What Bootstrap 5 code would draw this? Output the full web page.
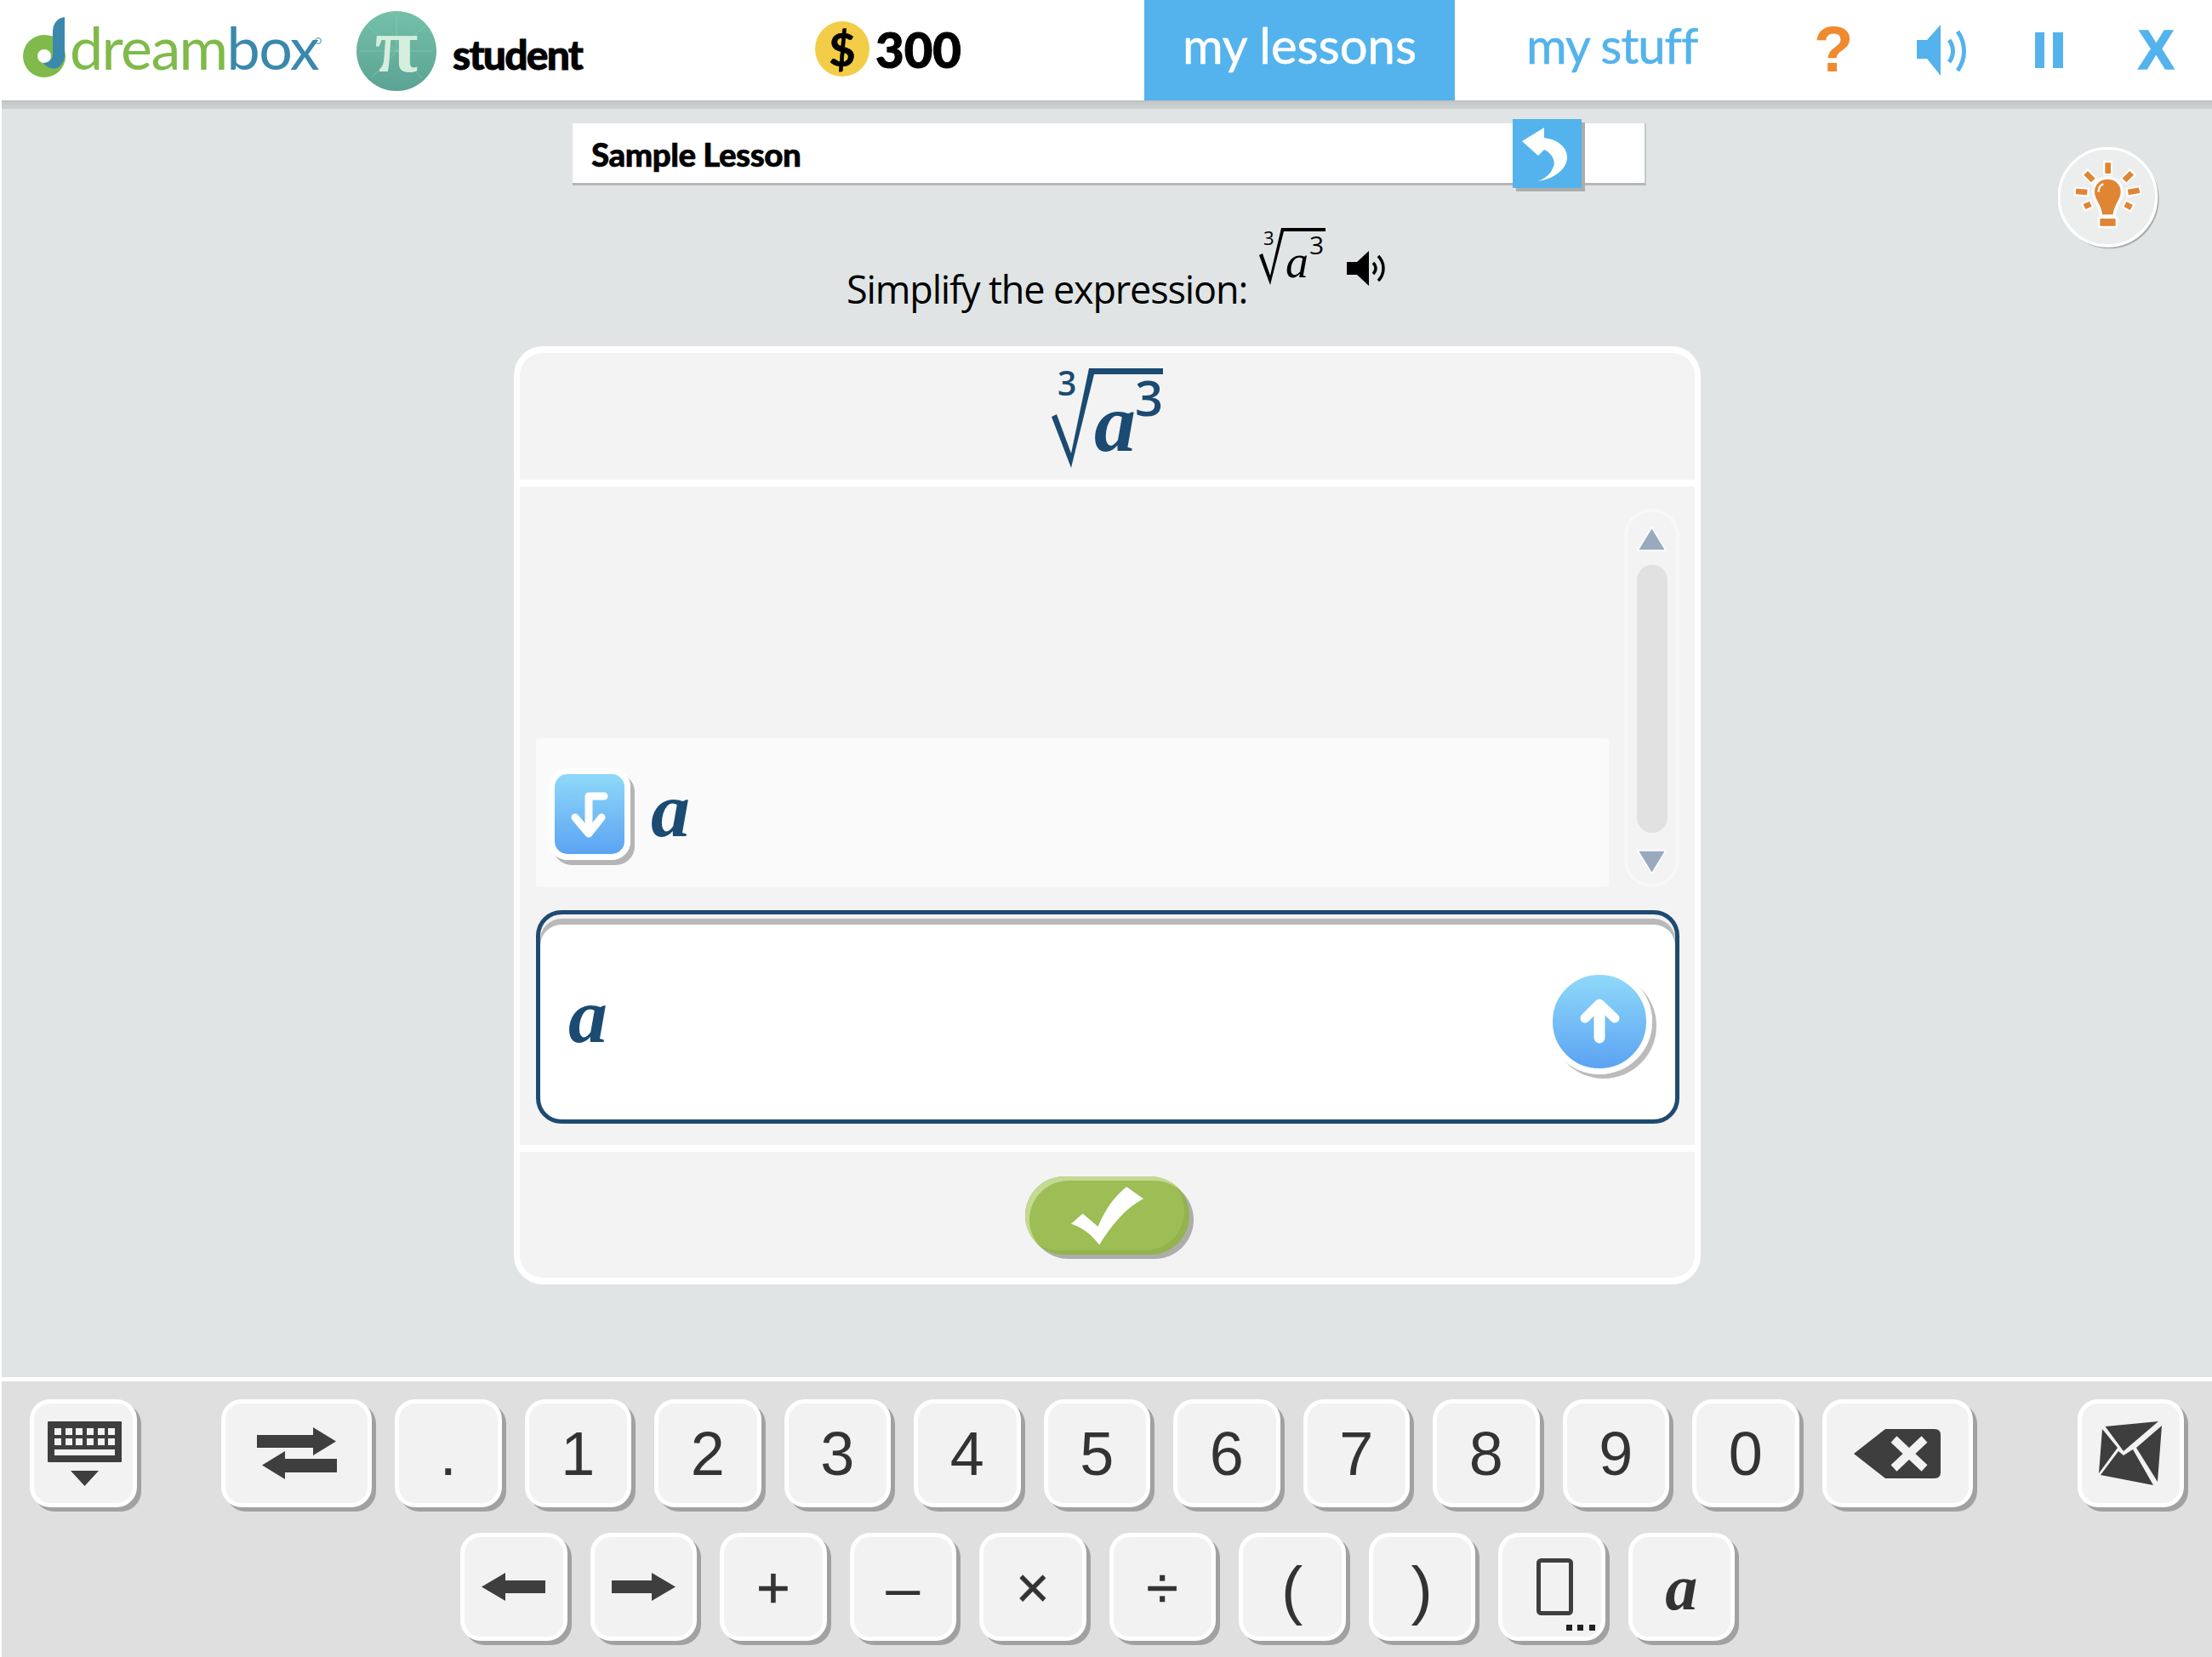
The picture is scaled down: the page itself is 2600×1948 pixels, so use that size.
<!DOCTYPE html>
<html lang="en">
<head>
<meta charset="utf-8">
<title>DreamBox lesson</title>
<link href="https://cdn.jsdelivr.net/npm/bootstrap@5.3.0/dist/css/bootstrap.min.css" rel="stylesheet">
<style>
html,body{margin:0;background:#fff}
.app{width:2600px;height:1948px;padding-left:2px;overflow:hidden;font-family:"Lato",sans-serif;background:#fff}
.top-bar{height:118px;background:#fff}
.top-shade{height:10px;background:linear-gradient(#b8bcbc,#c4c8c8 20%,#ced1d2)}
.logo-svg{width:518px;height:118px;flex:none}
.logo-word{font-family:"Lato",sans-serif;font-weight:400;font-size:70px;letter-spacing:-1.6px}
.who{width:426px;margin-left:12px;font-weight:900;font-size:48px;color:#000;line-height:1;padding-top:10px;letter-spacing:-1.8px;-webkit-text-stroke:.8px #000}
.coin{width:64px;height:65px;border-radius:50%;background:#f3cd47;font-weight:700;font-size:54px;line-height:65px;text-align:center;color:#000;margin-top:-3px;-webkit-text-stroke:.6px #000}
.coins{width:316px;margin-left:7px;font-weight:900;font-size:58px;line-height:1;color:#000;margin-top:-2px;-webkit-text-stroke:1px #000}
.tab-on{width:365px;height:118px;background:#54b3ec;color:#fff;font-size:58px;line-height:106px;text-align:center;font-weight:400;-webkit-text-stroke:.5px #fff}
.tab-off{width:338px;margin-left:84px;color:#54b3ec;font-size:58px;line-height:106px;align-self:flex-start;font-weight:400;letter-spacing:-1px;-webkit-text-stroke:.5px #54b3ec}
.ico-q{width:121px;color:#ef8a2f;font-family:"Liberation Sans",sans-serif;font-weight:700;font-size:76px;line-height:1;margin-top:-2px}
.ico-snd{width:139px;flex:none}
.ico-pause{width:121px;flex:none}
.ico-x{color:#54b3ec;font-family:"Liberation Sans",sans-serif;font-weight:700;font-size:64px;line-height:1;-webkit-text-stroke:1.5px #54b3ec}
.stage{background:#e0e4e5;padding-top:17px}
.hint{position:absolute;left:2417px;top:45px;width:122px;height:124px}
.title-bar{width:1262px;height:73px;margin-left:671px;background:#fff;border-bottom:3px solid #b3b7b7;border-right:2px solid #c4c8c8}
.title-text{font-weight:900;font-size:38.500px;color:#000;padding-left:22px;padding-top:2px;line-height:1;letter-spacing:-.5px;-webkit-text-stroke:.6px #000}
.back-btn{width:81px;height:81px;background:#54b3ec;margin:-5px 74px -6px 0;box-shadow:4px 4px 0 #a9adad;flex:none;border:0;padding:0}
.prompt{margin:47px 0 0 993px;height:142px}
.prompt-text{font-size:45px;line-height:1;color:#000;margin-top:52px;width:484px;flex:none;white-space:nowrap;font-family:"Open Sans",sans-serif;letter-spacing:-1.15px}
.prompt-snd{margin-left:19px;margin-top:30px}
.task{width:1395px;height:1103px;margin-left:602px;background:#f3f3f3;border:solid #fff;border-width:8px 7px;border-radius:34px;overflow:hidden}
.task-top{height:149px;padding-top:7px;border-bottom:0}
.sep-line{height:8px;background:#fff}
.task-mid{height:774px;padding:26px 18px 25px 19px}
.hist{height:445px}
.hist-row{height:175px;background:#fafafa;padding-left:15px;border-radius:4px}
.a-var{font-family:"Liberation Serif",serif;font-weight:700;font-style:italic;font-size:92px;line-height:1;color:#1b4a72}
.down-btn{width:96px;height:108px;padding:0;border:7px solid #fff;border-radius:22px;background:linear-gradient(#8fd9fa,#5ba3f2);box-shadow:5px 6px 0 #b5b5b5;margin:3px 24px 0 0}
.down-btn svg{display:block}
.sbar{width:65px;height:445px;border:4px solid #f8f8f8;border-radius:32px;padding-top:17px;margin-left:18px;flex:none}
.sbar svg{display:block}
.sbar-track{width:36px;height:315px;border-radius:18px;background:#e1e1e1;margin:15px 0 19px}
.answer{height:251px;margin-top:27px;background:#fff;border:5px solid #1e4a72;border-radius:30px;padding:0 27px 0 33px;box-shadow:inset 0 5px 0 #f2f2f2,inset 0 12px 0 #b9b9b9}
.up-btn{width:124px;height:124px;padding:0;border:7px solid #fff;border-radius:50%;background:linear-gradient(#8fd9fa,#5ba3f2);box-shadow:5px 5px 0 #bbb;margin-top:11px}
.up-btn svg{display:block}
.task-foot{height:148px}
.ok-btn{width:193px;height:92px;padding:0;border:0;border-radius:46px;background:#9dbd55;box-shadow:inset 5px 5px 0 #c3d994,inset -6px -5px 0 #93b34e,5px 5px 0 #adadad;margin-top:2px}
.ok-btn svg{display:block}
.pad{height:329px;background:#dfdfdf;border-top:5px solid #fff;padding-top:21px}
.pad-row{height:127px}
.pad-row-2{margin-top:30px;padding-left:539px}
.pad-row-1{padding-left:33px}
.kp-key{width:125.5px;height:127px;flex:none;padding:0;background:#f2f2f2;border:5px solid #fff;border-radius:24px;box-shadow:5px 5px 0 #a1a1a1;color:#333;font-family:"Liberation Sans",sans-serif;font-size:72px;line-height:1;margin-right:27px}
.kp-wide{width:177px}
.kp-first{margin-right:99.5px}
.kp-mail{margin-left:auto;margin-right:33px}
.kp-sm{font-size:68px;-webkit-text-stroke:.6px #333}
.kp-var{font-family:"Liberation Serif",serif;font-weight:700;font-style:italic;font-size:76px}
.kp-minus{font-size:72px;padding-top:0}
.kp-paren{font-size:76px;font-weight:400;padding-top:6px}
</style>
</head>
<body>
<div class="app d-flex flex-column">
  <header>
    <div class="top-bar d-flex align-items-center">
      <svg class="logo-svg" viewBox="2 0 518 118" role="img" aria-label="dreambox">
        <path d="M28,63 C31,50 46,41 62,42 L62,54 C48,49 36,52 28,63Z" fill="#89c7e4"/>
        <circle cx="52" cy="66" r="25" fill="#7fba4a"/>
        <circle cx="52" cy="66" r="8" fill="#fff"/>
        <path d="M76,20 C67,21 62,28 62,38 L62,64 C62,70 57,74 51,74 C55,80 65,83 70,78 C74,74 76,70 76,66Z" fill="#3b88ad"/>
        <text class="logo-word" x="82" y="82"><tspan fill="#7fba4a">dream</tspan><tspan fill="#3b88ad">box</tspan></text>
        <circle cx="374" cy="48" r="3.4" fill="none" stroke="#3b88ad" stroke-width="1"/>
        <defs>
          <linearGradient id="piFill" x1="0" y1="0" x2="0" y2="1"><stop offset="0" stop-color="#74c0a8"/><stop offset="1" stop-color="#5ba394"/></linearGradient>
        </defs>
        <circle cx="466" cy="60" r="47" fill="url(#piFill)"/>
        <g stroke="#8fd0ba" stroke-width="1" opacity=".6"><path d="M466,60 L466,18M466,60 L500,30M466,60 L432,30M466,60 L508,60M466,60 L424,60M466,60 L496,92M466,60 L436,92"/></g>
        <text x="466" y="84" text-anchor="middle" font-family="Liberation Serif" font-weight="700" font-size="92" fill="#d6eedd">π</text>
      </svg>
      <div class="who">student</div>
      <div class="coin">$</div>
      <div class="coins">300</div>
      <div class="tab-on">my lessons</div>
      <div class="tab-off">my stuff</div>
      <div class="ico-q">?</div>
      <svg class="ico-snd" height="60" viewBox="0 0 139 60" aria-label="sound">
        <path d="M0,18 H12 L28,0 V60 L12,40 H0Z" fill="#54b3ec"/>
        <path d="M38,18 C44,26 44,36 38,44" fill="none" stroke="#54b3ec" stroke-width="5"/>
        <path d="M48,8 C58,22 58,40 48,54" fill="none" stroke="#54b3ec" stroke-width="5"/>
      </svg>
      <svg class="ico-pause" height="42" viewBox="0 0 121 42" aria-label="pause"><rect width="11" height="42" fill="#54b3ec"/><rect x="21" width="12" height="42" fill="#54b3ec"/></svg>
      <div class="ico-x">X</div>
    </div>
    <div class="top-shade"></div>
  </header>

  <main class="stage flex-grow-1 position-relative d-flex flex-column align-items-start">
    <svg class="hint" viewBox="55 42 366 372" aria-label="hint">
      <circle cx="236" cy="225" r="175" fill="#a9adad"/>
      <circle cx="230" cy="218" r="172" fill="#eceded" stroke="#fff" stroke-width="10"/>
      <g stroke="#fff" stroke-width="32"><path d="M231,90 V140M148,128 L184,164M320,128 L284,164M112,198 L164,201M348,192 L296,203M142,255 L176,240M320,258 L286,240"/></g>
      <g stroke="#e08534" stroke-width="20"><path d="M231,97 V135M153,133 L179,159M315,133 L289,159M118,198 L158,201M342,194 L302,201M148,252 L170,242M314,255 L292,243"/></g>
      <path d="M230,150 C190,150 175,185 180,210 C185,235 205,250 207,285 H253 C255,250 275,235 280,210 C285,185 270,150 230,150Z" fill="#e08534" stroke="#fff" stroke-width="10"/>
      <rect x="199" y="290" width="63" height="34" rx="6" fill="#e08534" stroke="#fff" stroke-width="8"/>
      <path d="M198,200 C198,185 205,175 215,172" fill="none" stroke="#fff" stroke-width="7"/>
    </svg>

    <div class="title-bar d-flex align-items-center">
      <div class="title-text flex-grow-1">Sample Lesson</div>
      <button class="btn back-btn rounded-0" aria-label="back">
        <svg width="81" height="81" viewBox="0 0 81 81"><path d="M37,10 L11,26 L30,43 L37,36 C46,40 52,50 47,58 C45,64 38,70 30,73 C50,70 64,58 64,45 C64,32 52,24 37,22Z" fill="#fff"/></svg>
      </button>
    </div>

    <div class="prompt d-flex align-items-start">
      <div class="prompt-text">Simplify the expression:</div>
      <svg width="85" height="72" viewBox="1479 264 85 72" role="img" aria-label="cube root of a cubed">
        <path d="M1480,299 L1484,297 L1493,323 L1506,267 H1558 V271 H1509 L1493,334Z" fill="#000"/>
        <text x="1485" y="287" font-family="Open Sans" font-size="22" fill="#000">3</text>
        <text x="1511" y="325" font-family="Liberation Serif" font-style="italic" font-size="54" fill="#000">a</text>
        <text x="1539" y="298" font-family="Open Sans" font-size="30" fill="#000">3</text>
      </svg>
      <svg class="prompt-snd" width="45" height="42" viewBox="0 0 45 42" aria-label="read aloud">
        <path d="M0,13 H12 L26,0 V41 L12,28 H0Z" fill="#000"/>
        <path d="M31,14 C35,18 35,23 31,27" fill="none" stroke="#000" stroke-width="3.500"/>
        <path d="M37,6 C45,14 45,27 37,35" fill="none" stroke="#000" stroke-width="3.500"/>
      </svg>
    </div>

    <section class="task">
      <div class="task-top d-flex justify-content-center">
        <svg width="140" height="133" viewBox="0 -8 140 133" role="img" aria-label="cube root of a cubed">
          <path d="M4,60 L10,57 L27,103 L48,3 H135 V10 H54 L27,120Z" fill="#1b4a72"/>
          <text x="11" y="35" font-family="Open Sans" font-weight="600" font-size="39" fill="#1b4a72">3</text>
          <text x="54" y="100" font-family="Liberation Serif" font-weight="700" font-style="italic" font-size="98" fill="#1b4a72">a</text>
          <text x="102" y="59" font-family="Open Sans" font-weight="600" font-size="58" fill="#1b4a72">3</text>
        </svg>
      </div>
      <div class="sep-line"></div>
      <div class="task-mid">
        <div class="hist d-flex">
          <div class="flex-grow-1 d-flex flex-column justify-content-end">
            <div class="hist-row d-flex align-items-center">
              <button class="btn down-btn" aria-label="move down">
                <svg width="82" height="94" viewBox="0 0 82 94"><path d="M58,26 H40 V65" fill="none" stroke="#fff" stroke-width="9" stroke-linecap="round" stroke-linejoin="round"/><path d="M24,51 L40,70 L55,51" fill="none" stroke="#fff" stroke-width="9" stroke-linecap="round" stroke-linejoin="round"/></svg>
              </button>
              <span class="a-var mb-2">a</span>
            </div>
          </div>
          <div class="sbar d-flex flex-column align-items-center">
            <svg width="35" height="30" viewBox="0 0 35 30"><path d="M17.500,1 L34,28 H1Z" fill="#99aabf" stroke="#fff" stroke-width="1.500" stroke-linejoin="round"/></svg>
            <div class="sbar-track"></div>
            <svg width="35" height="30" viewBox="0 0 35 30"><path d="M1,2 H34 L17.500,29Z" fill="#99aabf" stroke="#fff" stroke-width="1.500" stroke-linejoin="round"/></svg>
          </div>
        </div>
        <div class="answer d-flex align-items-center justify-content-between">
          <span class="a-var mb-1">a</span>
          <button class="btn up-btn" aria-label="move up">
            <svg width="110" height="110" viewBox="0 0 110 110"><path d="M38,51 L55,34 L73,51" fill="none" stroke="#fff" stroke-width="11" stroke-linecap="round" stroke-linejoin="round"/><path d="M55,36 V74" fill="none" stroke="#fff" stroke-width="13" stroke-linecap="round"/></svg>
          </button>
        </div>
      </div>
      <div class="sep-line"></div>
      <div class="task-foot d-flex align-items-center justify-content-center">
        <button class="btn ok-btn" aria-label="submit">
          <svg width="193" height="92" viewBox="75 68 580 277"><path d="M237,236 L278,200 L332,246 C360,180 390,140 433,105 L493,147 C430,180 380,240 337,310 C310,275 280,250 237,236Z" fill="#fff"/></svg>
        </button>
      </div>
    </section>
  </main>

  <footer class="pad">
    <div class="pad-row pad-row-1 d-flex">
      <button class="btn kp-key kp-first d-flex align-items-center justify-content-center" aria-label="hide keyboard">
        <svg width="90" height="76" viewBox="-3 0 90 76">
          <rect width="87" height="48" rx="1" fill="#3e3e3e"/>
          <g fill="#f2f2f2"><rect x="8" y="8" width="8" height="8"/><rect x="21" y="8" width="8" height="8"/><rect x="33" y="8" width="8" height="8"/><rect x="46" y="8" width="8" height="8"/><rect x="59" y="8" width="8" height="8"/><rect x="71" y="8" width="8" height="8"/><rect x="8" y="20" width="8" height="8"/><rect x="21" y="20" width="8" height="8"/><rect x="33" y="20" width="8" height="8"/><rect x="46" y="20" width="8" height="8"/><rect x="59" y="20" width="8" height="8"/><rect x="71" y="20" width="8" height="8"/><rect x="8" y="33" width="71" height="7"/></g>
          <path d="M27,58 H60 L43.500,76Z" fill="#3e3e3e"/>
        </svg>
      </button>
      <button class="btn kp-key kp-wide d-flex align-items-center justify-content-center" aria-label="switch">
        <svg width="94" height="62" viewBox="0 0 94 62"><path d="M0,9 H66 V0 L93,16.500 L66,33 V24 H0Z" fill="#3e3e3e"/><path d="M94,37 H33 V28 L6,44.500 L33,61 V53 H94Z" fill="#3e3e3e"/></svg>
      </button>
      <button class="btn kp-key d-flex align-items-center justify-content-center">.</button>
      <button class="btn kp-key d-flex align-items-center justify-content-center">1</button>
      <button class="btn kp-key d-flex align-items-center justify-content-center">2</button>
      <button class="btn kp-key d-flex align-items-center justify-content-center">3</button>
      <button class="btn kp-key d-flex align-items-center justify-content-center">4</button>
      <button class="btn kp-key d-flex align-items-center justify-content-center">5</button>
      <button class="btn kp-key d-flex align-items-center justify-content-center">6</button>
      <button class="btn kp-key d-flex align-items-center justify-content-center">7</button>
      <button class="btn kp-key d-flex align-items-center justify-content-center">8</button>
      <button class="btn kp-key d-flex align-items-center justify-content-center">9</button>
      <button class="btn kp-key d-flex align-items-center justify-content-center">0</button>
      <button class="btn kp-key kp-wide d-flex align-items-center justify-content-center" aria-label="backspace">
        <svg width="102" height="58" viewBox="0 0 102 58"><path d="M0,29 L37,0 H95 Q102,0 102,7 V51 Q102,58 95,58 H37Z" fill="#3e3e3e"/><path d="M47,12 L83,46M83,12 L47,46" stroke="#f2f2f2" stroke-width="10" fill="none"/></svg>
      </button>
      <button class="btn kp-key kp-mail d-flex align-items-center justify-content-center" aria-label="send">
        <svg width="76" height="77" viewBox="2466 1670 76 77"><g fill="#3e3e3e"><path d="M2474.500,1677 L2537,1671 L2496,1706Z"/><path d="M2471,1680 L2489,1702 L2467,1732Z"/><path d="M2541,1676 L2536,1742 L2511,1702Z"/><path d="M2469,1734 L2490,1706 L2496,1711 L2507,1704 L2531,1746Z"/></g></svg>
      </button>
    </div>
    <div class="pad-row pad-row-2 d-flex">
      <button class="btn kp-key d-flex align-items-center justify-content-center" aria-label="left">
        <svg width="75" height="33" viewBox="0 0 75 33"><path d="M0,16.500 L28,0 V9 H75 V24 H28 V33Z" fill="#3e3e3e"/></svg>
      </button>
      <button class="btn kp-key d-flex align-items-center justify-content-center" aria-label="right">
        <svg width="75" height="33" viewBox="0 0 75 33"><path d="M75,16.500 L47,0 V9 H0 V24 H47 V33Z" fill="#3e3e3e"/></svg>
      </button>
      <button class="btn kp-key kp-sm d-flex align-items-center justify-content-center">+</button>
      <button class="btn kp-key kp-minus d-flex align-items-center justify-content-center">–</button>
      <button class="btn kp-key kp-sm d-flex align-items-center justify-content-center">×</button>
      <button class="btn kp-key kp-sm d-flex align-items-center justify-content-center">÷</button>
      <button class="btn kp-key kp-paren d-flex align-items-center justify-content-center">(</button>
      <button class="btn kp-key kp-paren d-flex align-items-center justify-content-center">)</button>
      <button class="btn kp-key d-flex align-items-center justify-content-center" aria-label="exponent">
        <svg width="108" height="108" viewBox="-36 -20 108 108"><rect x="2.500" y="2.500" width="38" height="62" rx="3" fill="none" stroke="#3e3e3e" stroke-width="5"/><rect x="35" y="78" width="7" height="7" fill="#222"/><rect x="48" y="78" width="7" height="7" fill="#222"/><rect x="62" y="78" width="7" height="7" fill="#222"/></svg>
      </button>
      <button class="btn kp-key kp-var d-flex align-items-center justify-content-center">a</button>
    </div>
  </footer>
</div>
<script src="https://cdn.jsdelivr.net/npm/bootstrap@5.3.0/dist/js/bootstrap.bundle.min.js"></script>
</body>
</html>
